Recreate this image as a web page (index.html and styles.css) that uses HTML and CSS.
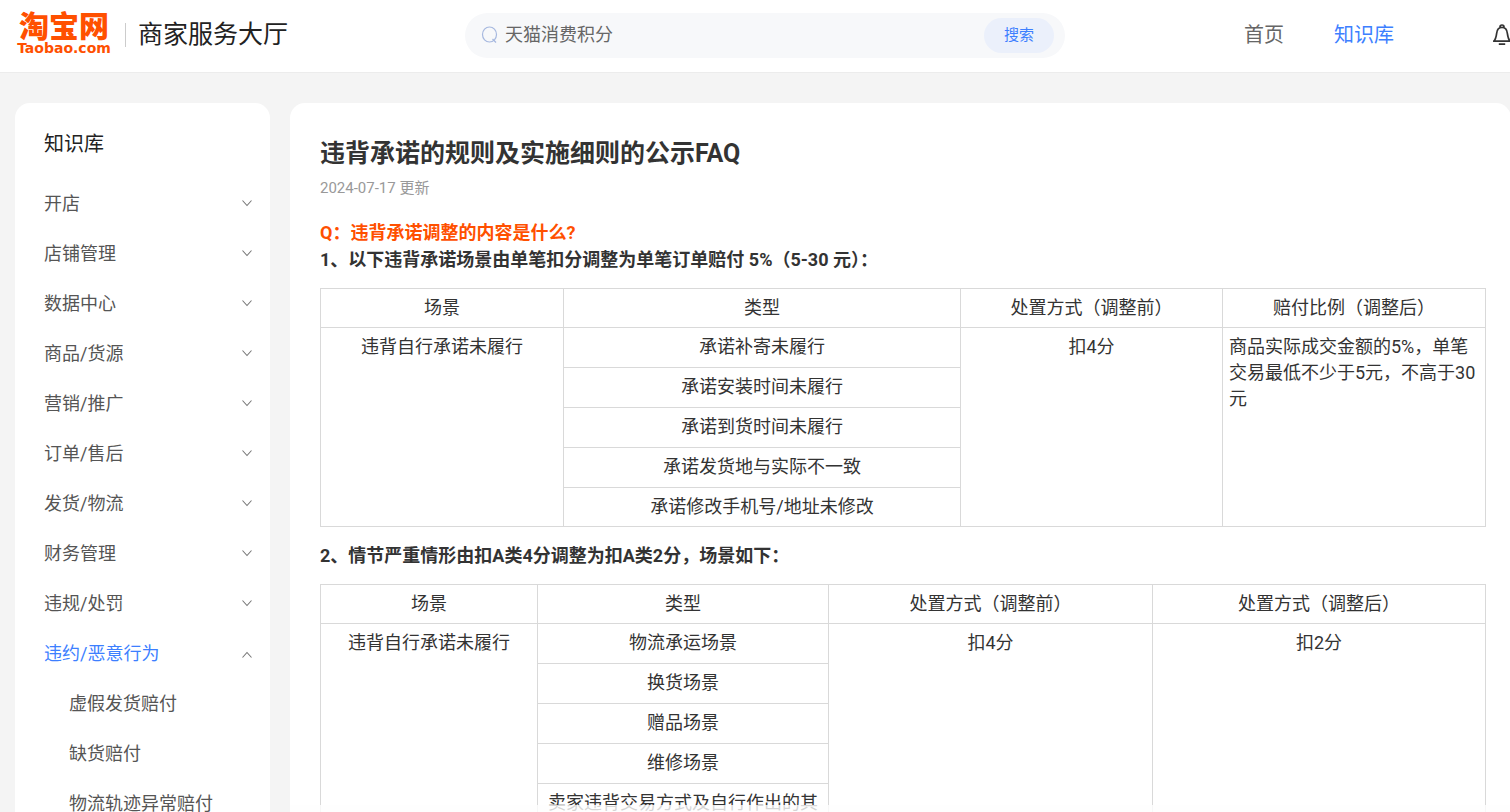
FILE: index.html
```html
<!DOCTYPE html>
<html lang="zh-CN">
<head>
<meta charset="utf-8">
<title>商家服务大厅</title>
<link rel="stylesheet" href="styles.css">
</head>
<body>
<svg class="sprite" aria-hidden="true">
  <symbol id="chevron" viewBox="0 0 12 12"><path d="M1.5 2.5 6 7.5 10.5 2.5" fill="none" stroke="currentColor" stroke-width="1.1"/></symbol>
</svg>
<header class="header">
  <div class="brand">
    <a class="logo" href="#"><span class="logo-cn">淘宝网</span><span class="logo-en">Taobao.com</span></a>
    <span class="brand-name">商家服务大厅</span>
  </div>
  <form class="search">
    <svg class="search-icon" viewBox="0 0 18 18" aria-hidden="true"><ellipse cx="8.5" cy="8.5" rx="7" ry="7.5" fill="none" stroke="currentColor" stroke-width="1.2"/><path d="M11.5 13 15 16.5" stroke="currentColor" stroke-width="1.2"/></svg>
    <input class="search-input" type="text" aria-label="搜索内容" placeholder="天猫消费积分">
    <button class="search-button" type="button">搜索</button>
  </form>
  <nav class="nav">
    <a class="nav-link" href="#">首页</a>
    <a class="nav-link active" href="#">知识库</a>
  </nav>
  <button class="bell" type="button" aria-label="消息">
    <svg viewBox="0 0 20 22" aria-hidden="true"><path d="M8 3a2 2 0 0 1 4 0M1.800 17.200c2-2 2.400-4.400 2.800-7.600C5 5.600 6.800 3.400 10 3.400s5 2.200 5.400 6.200c.4 3.200.8 5.600 2.800 7.600ZM6.800 20.200h6.400" fill="none" stroke="currentColor" stroke-width="1.7" stroke-linejoin="round"/></svg>
  </button>
</header>
<div class="layout">
  <aside class="sidebar">
    <h2 class="sidebar-title">知识库</h2>
    <ul class="menu">
      <li><button class="menu-item" type="button">开店<svg class="chevron"><use href="#chevron"/></svg></button></li>
      <li><button class="menu-item" type="button">店铺管理<svg class="chevron"><use href="#chevron"/></svg></button></li>
      <li><button class="menu-item" type="button">数据中心<svg class="chevron"><use href="#chevron"/></svg></button></li>
      <li><button class="menu-item" type="button">商品/货源<svg class="chevron"><use href="#chevron"/></svg></button></li>
      <li><button class="menu-item" type="button">营销/推广<svg class="chevron"><use href="#chevron"/></svg></button></li>
      <li><button class="menu-item" type="button">订单/售后<svg class="chevron"><use href="#chevron"/></svg></button></li>
      <li><button class="menu-item" type="button">发货/物流<svg class="chevron"><use href="#chevron"/></svg></button></li>
      <li><button class="menu-item" type="button">财务管理<svg class="chevron"><use href="#chevron"/></svg></button></li>
      <li><button class="menu-item" type="button">违规/处罚<svg class="chevron"><use href="#chevron"/></svg></button></li>
      <li><button class="menu-item open" type="button" aria-expanded="true">违约/恶意行为<svg class="chevron"><use href="#chevron"/></svg></button>
        <ul class="submenu">
          <li><a class="submenu-item" href="#">虚假发货赔付</a></li>
          <li><a class="submenu-item" href="#">缺货赔付</a></li>
          <li><a class="submenu-item" href="#">物流轨迹异常赔付</a></li>
        </ul>
      </li>
    </ul>
  </aside>
  <main class="article">
    <h1 class="title">违背承诺的规则及实施细则的公示FAQ</h1>
    <p class="date">2024-07-17 更新</p>
    <p class="question">Q：违背承诺调整的内容是什么?</p>
    <p class="point">1、以下违背承诺场景由单笔扣分调整为单笔订单赔付 5%（5-30 元）：</p>
    <table class="rules">
      <colgroup><col class="w-243"><col class="w-397"><col class="w-262"><col class="w-263"></colgroup>
      <tr><td>场景</td><td>类型</td><td>处置方式（调整前）</td><td>赔付比例（调整后）</td></tr>
      <tr><td rowspan="5">违背自行承诺未履行</td><td>承诺补寄未履行</td><td rowspan="5">扣4分</td><td rowspan="5" class="left">商品实际成交金额的5%，单笔交易最低不少于5元，不高于30元</td></tr>
      <tr><td>承诺安装时间未履行</td></tr>
      <tr><td>承诺到货时间未履行</td></tr>
      <tr><td>承诺发货地与实际不一致</td></tr>
      <tr><td>承诺修改手机号/地址未修改</td></tr>
    </table>
    <p class="point">2、情节严重情形由扣A类4分调整为扣A类2分，场景如下：</p>
    <table class="rules">
      <colgroup><col class="w-217"><col class="w-291"><col class="w-324"><col class="w-333"></colgroup>
      <tr><td>场景</td><td>类型</td><td>处置方式（调整前）</td><td>处置方式（调整后）</td></tr>
      <tr><td rowspan="5">违背自行承诺未履行</td><td>物流承运场景</td><td rowspan="5">扣4分</td><td rowspan="5">扣2分</td></tr>
      <tr><td>换货场景</td></tr>
      <tr><td>赠品场景</td></tr>
      <tr><td>维修场景</td></tr>
      <tr><td>卖家违背交易方式及自行作出的其他承诺</td></tr>
    </table>
    <div class="fade"></div>
  </main>
</div>
</body>
</html>
```
FILE: styles.css
```css
* { box-sizing: border-box; }
html { height: 100%; overflow: hidden; }
body {
  margin: 0;
  height: 100%;
  overflow: hidden;
  background: #f4f4f4;
  color: #333;
  font: 18px/26px Roboto, "Noto Sans CJK SC", sans-serif;
}
button, input { font: inherit; border: 0; background: none; padding: 0; }
a { color: inherit; text-decoration: none; }
h1, h2, p, ul { margin: 0; padding: 0; }
ul { list-style: none; }
.sprite { display: none; }

.header {
  display: grid;
  grid-template-columns: 450px 600px 1fr auto;
  align-items: center;
  height: 73px;
  padding-left: 15px;
  padding-bottom: 2px;
  background: #fff;
  border-bottom: 1px solid #ececec;
}
.brand { display: flex; align-items: center; }
.logo { display: flex; flex-direction: column; align-items: center; width: 98px; color: #ff5000; }
.logo-cn { font-size: 30px; line-height: 26px; font-weight: 900; }
.logo-en { font: bold 14px/16px "DejaVu Sans", sans-serif; }
.brand-name {
  margin-left: 12px;
  padding-left: 12px;
  border-left: 1px solid #ccc;
  color: #222;
  font-size: 25px;
  line-height: 24px;
}
.search {
  display: flex;
  align-items: center;
  height: 45px;
  padding: 0 11px 0 16px;
  border-radius: 23px;
  background: #f7f8fa;
}
.search-icon { width: 18px; height: 18px; color: #a6b8df; }
.search-input { flex: 1; min-width: 0; margin-left: 6px; outline: 0; }
.search-input::placeholder { color: #666; opacity: 1; }
.search-button {
  width: 70px;
  height: 35px;
  border-radius: 18px;
  background: #ebf0fb;
  color: #3d7fff;
  font-size: 15px;
}
.nav { display: flex; justify-content: flex-end; gap: 50px; color: #666; font-size: 20px; }
.nav-link.active { color: #3d7fff; }
.bell { width: 20px; height: 22px; margin: 0 -2px 0 98px; color: #333; }
.bell svg { display: block; width: 20px; height: 22px; }

.layout {
  display: grid;
  grid-template-columns: 255px 1fr;
  gap: 20px;
  padding: 30px 0 0 15px;
}
.sidebar, .article { background: #fff; border-radius: 15px; }
.sidebar { padding-top: 26px; }
.sidebar-title { padding: 0 29px; color: #222; font-size: 20px; line-height: 30px; font-weight: 400; }
.menu { padding-top: 20px; }
.menu-item {
  display: flex;
  align-items: center;
  justify-content: space-between;
  width: 100%;
  height: 50px;
  padding: 0 17px 0 29px;
  color: #555;
}
.menu-item.open { color: #3d7fff; }
.chevron { width: 12px; height: 12px; color: #777; }
.open .chevron { transform: rotate(180deg); }
.submenu-item { display: block; padding-left: 54px; line-height: 50px; color: #555; }

.article { padding: 32px 25px 0 30px; }
.title { font-size: 25px; line-height: 38px; }
.date { color: #999; font-size: 15px; line-height: 30px; }
.question { margin-top: 16px; color: #ff5000; font-weight: 700; line-height: 28px; }
.point { font-weight: 700; line-height: 26px; }
.rules {
  width: 100%;
  margin: 15px 0 16px;
  border-collapse: collapse;
  table-layout: fixed;
}
.rules td {
  height: 40px;
  padding: 6px;
  border: 1px solid #d9d9d9;
  text-align: center;
  vertical-align: top;
}
.rules tr:first-child td, .rules tr:last-child td { height: 39px; }
.rules .left { text-align: left; }
.w-217 { width: 217px; }
.w-243 { width: 243px; }
.w-262 { width: 262px; }
.w-263 { width: 263px; }
.w-291 { width: 291px; }
.w-324 { width: 324px; }
.w-333 { width: 333px; }
.w-397 { width: 397px; }
.fade {
  position: fixed;
  left: 290px;
  right: 0;
  bottom: 0;
  height: 7px;
  background: rgba(254, 254, 254, 0.8);
}
```
